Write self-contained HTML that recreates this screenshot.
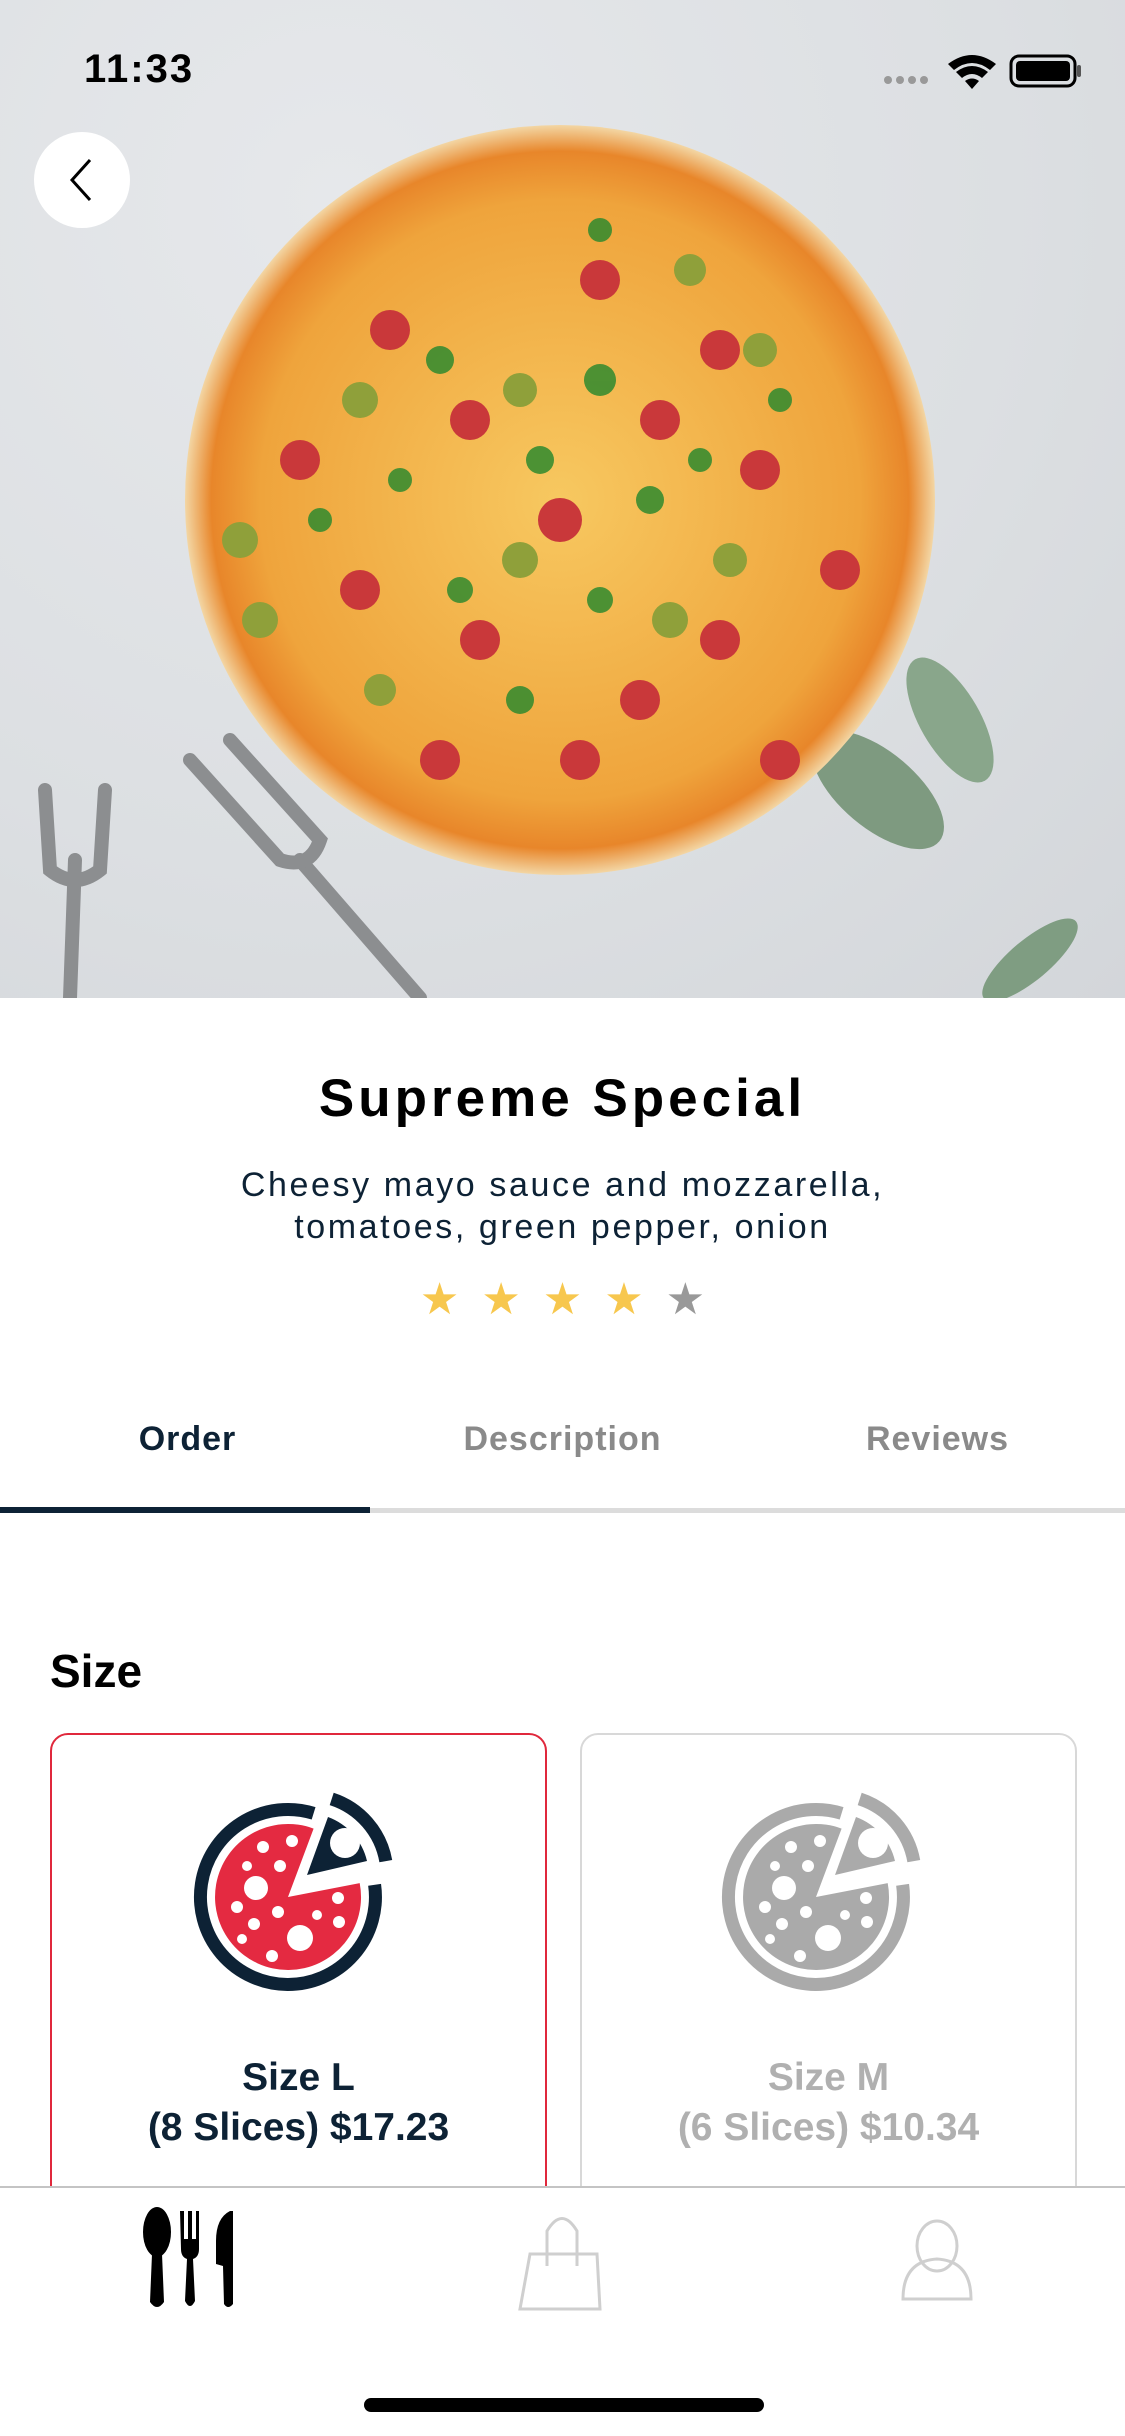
<!DOCTYPE html>
<html><head><meta charset="utf-8">
<style>
*{margin:0;padding:0;box-sizing:border-box}
body{width:1125px;height:2436px;background:#fff;position:relative;overflow:hidden;font-family:"Liberation Sans",sans-serif}
.abs{position:absolute}
.hero{left:0;top:0;width:1125px;height:998px;background:radial-gradient(circle at 30% 20%,#e6e8eb,#dcdfe2 60%,#d3d6da);overflow:hidden}
.center{text-align:center;width:1125px;left:0}
.tab{top:1420px;font-size:34px;font-weight:bold;color:#8a8a8a;text-align:center;width:375px;letter-spacing:1px}
.card{top:1733px;width:497px;height:540px;border-radius:18px;background:#fff}
.lbl{width:497px;text-align:center;font-size:39px;font-weight:bold;line-height:50px}
</style></head><body>
<div class="abs hero">
 <svg width="1125" height="998" style="position:absolute;left:0;top:0">
  <defs>
   <radialGradient id="pz" cx="50%" cy="50%" r="50%">
    <stop offset="0" stop-color="#f7c860"/><stop offset="0.8" stop-color="#efa43c"/><stop offset="0.93" stop-color="#e8862a"/><stop offset="1" stop-color="#f3d6a4"/>
   </radialGradient>
  </defs>
  <ellipse cx="878" cy="790" rx="80" ry="38" fill="#7e9a80" transform="rotate(40 878 790)"/>
  <ellipse cx="950" cy="720" rx="70" ry="30" fill="#89a68b" transform="rotate(60 950 720)"/>
  <ellipse cx="1030" cy="960" rx="60" ry="20" fill="#7f9d82" transform="rotate(-40 1030 960)"/>
  <circle cx="560" cy="500" r="375" fill="url(#pz)"/>
  <g fill="#c9383a">
   <circle cx="390" cy="330" r="20"/><circle cx="470" cy="420" r="20"/><circle cx="600" cy="280" r="20"/><circle cx="720" cy="350" r="20"/><circle cx="300" cy="460" r="20"/><circle cx="560" cy="520" r="22"/><circle cx="760" cy="470" r="20"/><circle cx="840" cy="570" r="20"/><circle cx="480" cy="640" r="20"/><circle cx="640" cy="700" r="20"/><circle cx="360" cy="590" r="20"/><circle cx="720" cy="640" r="20"/><circle cx="580" cy="760" r="20"/><circle cx="440" cy="760" r="20"/><circle cx="780" cy="760" r="20"/><circle cx="660" cy="420" r="20"/>
  </g>
  <g fill="#8fa03a">
   <circle cx="360" cy="400" r="18"/><circle cx="520" cy="390" r="17"/><circle cx="690" cy="270" r="16"/><circle cx="240" cy="540" r="18"/><circle cx="520" cy="560" r="18"/><circle cx="730" cy="560" r="17"/><circle cx="670" cy="620" r="18"/><circle cx="260" cy="620" r="18"/><circle cx="760" cy="350" r="17"/><circle cx="380" cy="690" r="16"/>
  </g>
  <g fill="#2f8a2e" opacity="0.85">
   <circle cx="440" cy="360" r="14"/><circle cx="600" cy="380" r="16"/><circle cx="540" cy="460" r="14"/><circle cx="650" cy="500" r="14"/><circle cx="400" cy="480" r="12"/><circle cx="700" cy="460" r="12"/><circle cx="460" cy="590" r="13"/><circle cx="600" cy="600" r="13"/><circle cx="520" cy="700" r="14"/><circle cx="320" cy="520" r="12"/><circle cx="780" cy="400" r="12"/><circle cx="600" cy="230" r="12"/>
  </g>
  <g fill="none" stroke="#8c8e90" stroke-width="14" stroke-linecap="round">
   <path d="M70 998 L75 860"/><path d="M45 790 L50 870 Q75 890 100 870 L105 790"/>
   <path d="M420 998 L300 860"/><path d="M190 760 L280 860 Q310 870 320 840 L230 740"/>
  </g>
  <circle cx="82" cy="180" r="48" fill="#fff"/>
  <path d="M90 160 L72 180 L90 200" fill="none" stroke="#000" stroke-width="3"/>
  <text x="84" y="82" font-size="40" font-weight="bold" fill="#000" font-family="Liberation Sans" letter-spacing="2">11:33</text>
  <g fill="#999"><circle cx="888" cy="80" r="4"/><circle cx="900" cy="80" r="4"/><circle cx="912" cy="80" r="4"/><circle cx="924" cy="80" r="4"/></g>
  <path d="M948 64 Q972 46 996 64 L990 70 Q972 56 954 70Z M956 72 Q972 60 988 72 L982 78 Q972 70 962 78Z M965 81 Q972 76 979 81 L972 89Z" fill="#000"/>
  <rect x="1011" y="56" width="64" height="30" rx="8" fill="none" stroke="#000" stroke-width="3"/>
  <rect x="1016" y="61" width="54" height="20" rx="4" fill="#000"/>
  <rect x="1077" y="65" width="4" height="12" rx="2" fill="#555"/>
 </svg>
</div>
<div class="abs center" style="top:1068px;font-size:53px;font-weight:bold;color:#000;letter-spacing:4px">Supreme Special</div>
<div class="abs center" style="top:1164px;font-size:34px;line-height:42px;color:#0d2235;letter-spacing:2.6px">Cheesy mayo sauce and mozzarella,<br>tomatoes, green pepper, onion</div>
<div class="abs center" style="top:1274px;font-size:44px;color:#f7c74e;letter-spacing:22px;padding-left:22px">★★★★<span style="color:#999">★</span></div>
<div class="abs tab" style="left:0;color:#0d2235">Order</div>
<div class="abs tab" style="left:375px">Description</div>
<div class="abs tab" style="left:750px">Reviews</div>
<div class="abs" style="left:0;top:1508px;width:1125px;height:5px;background:#dcdcdc"></div>
<div class="abs" style="left:0;top:1507px;width:370px;height:6px;background:#0d2235"></div>
<div class="abs" style="left:50px;top:1644px;font-size:46px;font-weight:bold;color:#000">Size</div>
<div class="abs card" style="left:50px;border:2px solid #e0283c"></div>
<div class="abs card" style="left:580px;border:2px solid #d8d8d8"></div>
<svg class="abs" style="left:150px;top:1750px" width="300" height="280">
 <g fill="#0d2235"><path d="M224.6 134.8 A87.5 87.5 0 1 1 163.6 63.3" fill="none" stroke="#0d2235" stroke-width="13"/>
 <path d="M157 125 L178 67 A62 62 0 0 1 217 111 Z"/>
 <path d="M181.7 48.9 A80 80 0 0 1 235.8 111.1" fill="none" stroke="#0d2235" stroke-width="13"/></g>
 <path d="M138 147 L209.7 133.1 A73 73 0 1 1 163.6 78.6 Z" fill="#e42a41"/>
 <g fill="#fff"><circle cx="195" cy="93" r="15"/><circle cx="106" cy="138" r="12"/><circle cx="150" cy="188" r="13"/>
 <circle cx="113" cy="97" r="6"/><circle cx="142" cy="91" r="6"/><circle cx="97" cy="116" r="5"/><circle cx="130" cy="116" r="6"/><circle cx="87" cy="157" r="6"/><circle cx="128" cy="162" r="6"/><circle cx="167" cy="165" r="5"/><circle cx="188" cy="148" r="6"/><circle cx="189" cy="172" r="6"/><circle cx="104" cy="174" r="6"/><circle cx="92" cy="189" r="5"/><circle cx="122" cy="206" r="6"/></g>
</svg>
<svg class="abs" style="left:678px;top:1750px" width="300" height="280">
 <g fill="#aaa"><path d="M224.6 134.8 A87.5 87.5 0 1 1 163.6 63.3" fill="none" stroke="#aaa" stroke-width="13"/>
 <path d="M157 125 L178 67 A62 62 0 0 1 217 111 Z"/>
 <path d="M181.7 48.9 A80 80 0 0 1 235.8 111.1" fill="none" stroke="#aaa" stroke-width="13"/>
 <path d="M138 147 L209.7 133.1 A73 73 0 1 1 163.6 78.6 Z"/></g>
 <g fill="#fff"><circle cx="195" cy="93" r="15"/><circle cx="106" cy="138" r="12"/><circle cx="150" cy="188" r="13"/>
 <circle cx="113" cy="97" r="6"/><circle cx="142" cy="91" r="6"/><circle cx="97" cy="116" r="5"/><circle cx="130" cy="116" r="6"/><circle cx="87" cy="157" r="6"/><circle cx="128" cy="162" r="6"/><circle cx="167" cy="165" r="5"/><circle cx="188" cy="148" r="6"/><circle cx="189" cy="172" r="6"/><circle cx="104" cy="174" r="6"/><circle cx="92" cy="189" r="5"/><circle cx="122" cy="206" r="6"/></g>
</svg>
<div class="abs lbl" style="left:50px;top:2053px;color:#0d2235">Size L<br>(8 Slices) $17.23</div>
<div class="abs lbl" style="left:580px;top:2053px;color:#b0b0b0">Size M<br>(6 Slices) $10.34</div>
<div class="abs" style="left:0;top:2186px;width:1125px;height:250px;background:#fff;border-top:2px solid #c4c4c4"></div>
<svg class="abs" style="left:0;top:2186px" width="1125" height="250">
 <g fill="#000">
  <ellipse cx="157" cy="46" rx="14" ry="25"/><path d="M152 68 L162 68 L164 116 Q157 126 150 116Z"/>
  <path d="M180 25 h4 v28 h4 v-28 h4 v28 h4 v-28 h3 v38 q0 8 -6 10 l2 42 q-5 10 -10 0 l2 -42 q-6 -2 -6 -10z"/>
  <path d="M230 25 L233 25 L233 118 Q228 124 224 118 L223 80 L216 78 L216 55 Q216 32 230 25Z"/>
 </g>
 <g fill="none" stroke="#cfcfcf" stroke-width="3">
  <path d="M530 68 L597 68 L600 123 L520 123Z"/>
  <path d="M547 80 V45 Q562 20 577 45 V80"/>
 </g>
 <g fill="none" stroke="#cfcfcf" stroke-width="3">
  <ellipse cx="937" cy="60" rx="20" ry="25"/>
  <path d="M903 113 Q903 75 937 73 Q971 75 971 113 Z"/>
 </g>
 <rect x="364" y="212" width="400" height="14" rx="7" fill="#000"/>
</svg>
</body></html>
